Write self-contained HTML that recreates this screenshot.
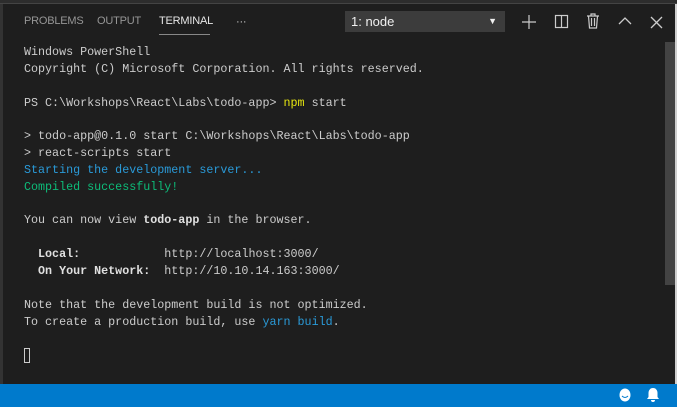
<!DOCTYPE html><html><head><style>
body{margin:0;width:677px;height:407px;background:#1e1e1e;position:relative;overflow:hidden;font-family:"Liberation Sans",sans-serif}
.tab{position:absolute;top:15px;font-size:11px;color:#969696;letter-spacing:-.2px}
.t{position:absolute;left:24px;top:44px;font-family:"Liberation Mono",monospace;font-size:11.7px;line-height:16.85px;color:#cccccc;white-space:pre}
.y{color:#e5e510}.b{color:#2a9ad8}.g{color:#0dbc79}
b{font-weight:bold;color:#e0e0e0}
svg{position:absolute}
</style></head><body>
<div style="position:absolute;left:0;top:0;width:677px;height:3px;background:#2d2d2d"></div>
<div style="position:absolute;left:0;top:3px;width:677px;height:1px;background:#444"></div>
<div style="position:absolute;left:0;top:4px;width:3px;height:380px;background:#333"></div>
<div style="position:absolute;right:0;top:4px;width:2px;height:380px;background:#cfcfcf"></div>
<div class="tab" style="left:24px">PROBLEMS</div>
<div class="tab" style="left:97px">OUTPUT</div>
<div class="tab" style="left:159px;color:#e7e7e7">TERMINAL</div>
<div class="tab" style="left:236px;top:16px;color:#ccc">···</div>
<div style="position:absolute;left:159px;top:34px;width:51px;height:1px;background:#888"></div>
<div style="position:absolute;left:345px;top:11px;width:160px;height:21px;background:#3c3c3c;color:#f0f0f0;font-size:13px;line-height:21px;text-indent:6px">1: node<span style="position:absolute;right:8px;font-size:9px">▼</span></div>
<svg style="left:521px;top:14px" width="16" height="16" stroke="#ccc" fill="none" stroke-width="1.2"><path d="M8 1v14M1 8h14"/></svg>
<svg style="left:554px;top:14px" width="16" height="16" stroke="#ccc" fill="none" stroke-width="1.2"><rect x="1.5" y="1.5" width="12" height="12"/><path d="M7.5 1.5v12"/></svg>
<svg style="left:586px;top:13px" width="16" height="17" stroke="#ccc" fill="none" stroke-width="1.2"><path d="M1 3h12M5 3V1h4v2M2.5 3l1 12h7l1-12M5.5 5v8M8.5 5v8"/></svg>
<svg style="left:617px;top:16px" width="16" height="10" stroke="#ccc" fill="none" stroke-width="1.3"><path d="M2 8l6-6 6 6"/></svg>
<svg style="left:650px;top:16px" width="14" height="14" stroke="#ccc" fill="none" stroke-width="1.3"><path d="M1 1l11 11M12 1L1 12"/></svg>
<div style="position:absolute;left:665px;top:42px;width:10px;height:243px;background:#434343"></div>
<div class="t">Windows PowerShell
Copyright (C) Microsoft Corporation. All rights reserved.

PS C:\Workshops\React\Labs\todo-app&gt; <span class="y">npm</span> start

&gt; todo-app@0.1.0 start C:\Workshops\React\Labs\todo-app
&gt; react-scripts start
<span class="b">Starting the development server...</span>
<span class="g">Compiled successfully!</span>

You can now view <b>todo-app</b> in the browser.

  <b>Local:</b>            http://localhost:3000/
  <b>On Your Network:</b>  http://10.10.14.163:3000/

Note that the development build is not optimized.
To create a production build, use <span class="b">yarn build</span>.
</div>
<div style="position:absolute;left:24px;top:348px;width:6px;height:15px;border:1px solid #ccc;box-sizing:border-box"></div>
<div style="position:absolute;left:0;top:384px;width:677px;height:23px;background:#007acc"></div>
<svg style="left:618px;top:387px" width="14" height="16"><ellipse cx="7" cy="8" rx="5.5" ry="6.5" fill="#fff"/><path d="M4 9q3 3 6 0" stroke="#007acc" fill="none"/></svg>
<svg style="left:646px;top:387px" width="14" height="16" fill="#fff"><path d="M7 1c3 0 4.5 2.5 4.5 5v4l1.5 2H1l1.5-2V6C2.5 3.5 4 1 7 1zM5 13h4a2 2 0 01-4 0z"/></svg>
</body></html>
